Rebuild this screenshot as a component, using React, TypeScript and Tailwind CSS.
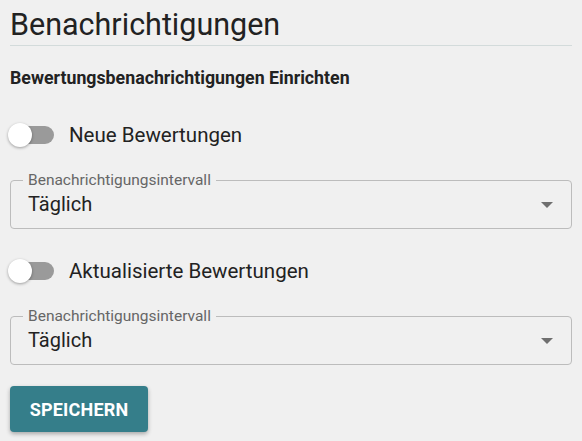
// Benachrichtigungs-Einstellungen: zwei Schalter, je ein Intervall-Select darunter
const FONT = { fontFamily: 'Roboto, "Liberation Sans", sans-serif' }

function Toggle({ label }: { label: string }) {
  return (
    <div className="flex items-center h-[38px]">
      <div className="relative w-[46px] h-[24px] -ml-[2px] shrink-0">
        <div className="absolute left-[1px] top-[3px] w-[45px] h-[18px] rounded-full bg-[#9a9a9a]" />
        <div className="absolute left-0 top-0 w-[24px] h-[24px] rounded-full bg-white shadow-[0_1px_3px_rgba(0,0,0,0.35)]" />
      </div>
      <span className="ml-[15px] text-[20.5px] leading-[24px] text-[#222]">{label}</span>
    </div>
  )
}

function IntervalSelect({ value }: { value: string }) {
  return (
    <div className="relative h-[49px] rounded-[4px] border border-[#bcbcbc] flex items-center pl-[17px] pr-[17px]">
      <span className="absolute left-[12px] -top-[10px] px-[5px] bg-[#f0f0f0] text-[15.5px] leading-[18px] text-[#666]">
        Benachrichtigungsintervall
      </span>
      <span className="flex-1 text-[20px] leading-[24px] text-[#222] -mt-[2px]">{value}</span>
      <svg width="12" height="6" viewBox="0 0 12 6" className="mr-px">
        <path d="M0 0 L12 0 L6 6 Z" fill="#6f6f6f" />
      </svg>
    </div>
  )
}

export default function App() {
  return (
    <div className="w-[582px] h-[441px] bg-[#f0f0f0] overflow-hidden px-[10px]" style={FONT}>
      <div className="h-[46px] pt-[7px] border-b border-[#d3dbdb]">
        <h1 className="text-[30.5px] leading-[36px] text-[#222]">Benachrichtigungen</h1>
      </div>
      <div className="mt-[22px] text-[17.75px] leading-[20px] font-bold text-[#222]">
        Bewertungsbenachrichtigungen Einrichten
      </div>

      <div className="mt-[28px]">
        <Toggle label="Neue Bewertungen" />
      </div>
      <div className="mt-[26px]">
        <IntervalSelect value="Täglich" />
      </div>

      <div className="mt-[23px]">
        <Toggle label="Aktualisierte Bewertungen" />
      </div>
      <div className="mt-[26px]">
        <IntervalSelect value="Täglich" />
      </div>

      <button className="mt-[21px] h-[46px] w-[138px] rounded-[4px] bg-[#357e8a] text-white text-[18px] font-bold tracking-[0.2px] shadow-[0_2px_4px_rgba(0,0,0,0.3)]">
        SPEICHERN
      </button>
    </div>
  )
}
